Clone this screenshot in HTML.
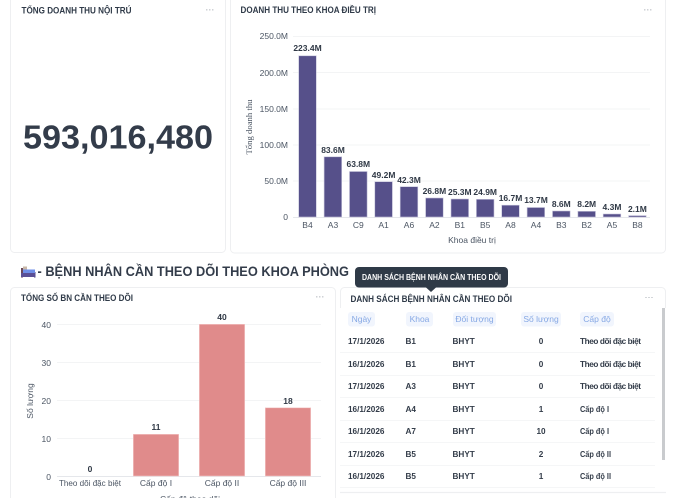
<!DOCTYPE html>
<html><head><meta charset="utf-8"><style>
html,body{margin:0;padding:0;width:682px;height:498px;overflow:hidden;background:#fff}
svg{display:block;font-family:"Liberation Sans",sans-serif}
.t{font-size:9.5px;font-weight:bold;fill:#2f3a48}
.a{font-size:8.5px;fill:#4b5563}
.v{font-size:8.5px;font-weight:bold;fill:#303946;text-anchor:middle}
.m{text-anchor:middle}
.e{text-anchor:end}
.g{stroke:#f3f4f5;stroke-width:1}
.b{fill:#56508a;stroke:#c6c4da;stroke-width:.6}
.r{fill:#e08b8b;stroke:#f3c9c9;stroke-width:.6}
.c{font-size:8.2px;font-weight:bold;fill:#333c49}
.h{font-size:8.5px;fill:#86a8e4;text-anchor:middle}
.p{fill:#f1f5fd}
.l{stroke:#f5f6f7;stroke-width:1}
</style></head><body>
<svg width="682" height="498" viewBox="0 0 682 498" xmlns="http://www.w3.org/2000/svg">
<rect x="10.5" y="-10" width="215" height="262.5" rx="4" fill="#fff" stroke="#eeeff1"/>
<rect x="230.5" y="-10" width="435" height="263" rx="4" fill="#fff" stroke="#eeeff1"/>
<rect x="10.5" y="287.5" width="325" height="230" rx="4" fill="#fff" stroke="#eeeff1"/>
<rect x="340.5" y="287.5" width="325" height="230" rx="4" fill="#fff" stroke="#eeeff1"/>
<rect x="340" y="308" width="327" height="190" fill="#fff"/>

<text class="t" x="21.5" y="13.5" textLength="110" lengthAdjust="spacingAndGlyphs">TỔNG DOANH THU NỘI TRÚ</text>
<text x="210" y="13" font-size="9" fill="#c4c7cc" font-weight="bold" class="m">···</text>
<text x="23" y="148.5" font-size="33.5" font-weight="bold" fill="#333c4a" textLength="190" lengthAdjust="spacingAndGlyphs">593,016,480</text>

<text class="t" x="240.5" y="13" textLength="135.5" lengthAdjust="spacingAndGlyphs">DOANH THU THEO KHOA ĐIỀU TRỊ</text>
<text x="648" y="13" font-size="9" fill="#c4c7cc" font-weight="bold" class="m">···</text>
<g class="g"><line x1="293" x2="650" y1="36.5" y2="36.5"/><line x1="293" x2="650" y1="72.5" y2="72.5"/><line x1="293" x2="650" y1="109" y2="109"/><line x1="293" x2="650" y1="145" y2="145"/><line x1="293" x2="650" y1="181" y2="181"/></g>
<line x1="293" x2="650" y1="217.5" y2="217.5" stroke="#e5e7eb"/>
<g class="a e"><text x="288" y="39">250.0M</text><text x="288" y="76">200.0M</text><text x="288" y="112">150.0M</text><text x="288" y="148">100.0M</text><text x="288" y="184">50.0M</text><text x="288" y="220">0</text></g>
<text class="a m" transform="translate(252,127) rotate(-90)" font-family="Liberation Serif" textLength="55" lengthAdjust="spacingAndGlyphs">Tổng doanh thu</text>
<g class="b">
<rect x="298.7" y="55.8" width="17.6" height="161.2"/><rect x="324.1" y="156.8" width="17.6" height="60.2"/><rect x="349.5" y="171.5" width="17.6" height="45.5"/><rect x="374.8" y="181.7" width="17.6" height="35.3"/><rect x="400.2" y="186.7" width="17.6" height="30.3"/><rect x="425.6" y="198" width="17.6" height="19"/><rect x="451" y="199" width="17.6" height="18"/><rect x="476.4" y="199.3" width="17.6" height="17.7"/><rect x="501.7" y="205.2" width="17.6" height="11.8"/><rect x="527.1" y="207.5" width="17.6" height="9.5"/><rect x="552.5" y="211" width="17.6" height="6"/><rect x="577.9" y="211.3" width="17.6" height="5.7"/><rect x="603.2" y="214" width="17.6" height="3"/><rect x="628.6" y="215.6" width="17.6" height="1.4"/>
</g>
<g class="v"><text x="307.5" y="51">223.4M</text><text x="333" y="153">83.6M</text><text x="358.3" y="167">63.8M</text><text x="383.6" y="178">49.2M</text><text x="409" y="183">42.3M</text><text x="434.4" y="194">26.8M</text><text x="459.8" y="195">25.3M</text><text x="485.2" y="195">24.9M</text><text x="510.5" y="201">16.7M</text><text x="536" y="203">13.7M</text><text x="561.3" y="207">8.6M</text><text x="586.7" y="207">8.2M</text><text x="612" y="210">4.3M</text><text x="637.4" y="212">2.1M</text></g>
<g class="a m"><text x="307.5" y="228">B4</text><text x="333" y="228">A3</text><text x="358.3" y="228">C9</text><text x="383.6" y="228">A1</text><text x="409" y="228">A6</text><text x="434.4" y="228">A2</text><text x="459.8" y="228">B1</text><text x="485.2" y="228">B5</text><text x="510.5" y="228">A8</text><text x="536" y="228">A4</text><text x="561.3" y="228">B3</text><text x="586.7" y="228">B2</text><text x="612" y="228">A5</text><text x="637.4" y="228">B8</text><text x="472" y="243">Khoa điều trị</text></g>

<g>
<rect x="21" y="268" width="2" height="9.5" fill="#6b4a5a"/><rect x="34" y="272" width="1.5" height="5.5" fill="#4a4a8a"/>
<rect x="23" y="266.5" width="4" height="3.5" fill="#c9b8a8"/><rect x="23" y="269.5" width="12" height="4" fill="#6f8fe8"/><rect x="21" y="273" width="14.5" height="4" fill="#5a4f96"/>
</g>
<text x="37.5" y="276" font-size="14" font-weight="bold" fill="#333c4a" textLength="311.5" lengthAdjust="spacingAndGlyphs">- BỆNH NHÂN CẦN THEO DÕI THEO KHOA PHÒNG</text>

<text class="t" x="21" y="301" textLength="112" lengthAdjust="spacingAndGlyphs">TỔNG SỐ BN CẦN THEO DÕI</text>
<text x="320" y="300" font-size="9" fill="#c4c7cc" font-weight="bold" class="m">···</text>
<g class="g"><line x1="57" x2="321" y1="324.5" y2="324.5"/><line x1="57" x2="321" y1="362.5" y2="362.5"/><line x1="57" x2="321" y1="400.5" y2="400.5"/><line x1="57" x2="321" y1="438.5" y2="438.5"/></g>
<line x1="57" x2="321" y1="476.5" y2="476.5" stroke="#e5e7eb"/>
<g class="a e"><text x="51" y="328">40</text><text x="51" y="366">30</text><text x="51" y="404">20</text><text x="51" y="442">10</text><text x="51" y="480">0</text></g>
<text class="a m" transform="translate(33,401) rotate(-90)">Số lượng</text>
<g class="r"><rect x="133.3" y="434.3" width="45.4" height="41.7"/><rect x="199.3" y="324.3" width="45.4" height="151.7"/><rect x="265.3" y="407.8" width="45.4" height="68.2"/></g>
<g class="v"><text x="90" y="472">0</text><text x="156" y="430">11</text><text x="222" y="320">40</text><text x="288" y="404">18</text></g>
<g class="a m"><text x="90" y="486" textLength="62" lengthAdjust="spacingAndGlyphs">Theo dõi đặc biệt</text><text x="156" y="486">Cấp độ I</text><text x="222" y="486">Cấp độ II</text><text x="288" y="486">Cấp độ III</text><text x="190" y="502">Cấp độ theo dõi</text></g>

<text x="350.5" y="302" font-size="9.5" fill="#2f3a48" font-weight="bold" textLength="161.5" lengthAdjust="spacingAndGlyphs">DANH SÁCH BỆNH NHÂN CẦN THEO DÕI</text>
<text x="649" y="300" font-size="9" fill="#9aa0a8" class="m">···</text>

<g class="p"><rect x="348" y="312" width="27" height="14.5" rx="3"/><rect x="406" y="312" width="27" height="14.5" rx="3"/><rect x="453" y="312" width="43" height="14.5" rx="3"/><rect x="521" y="312" width="40" height="14.5" rx="3"/><rect x="580" y="312" width="34" height="14.5" rx="3"/></g>
<g class="h"><text x="361.5" y="322">Ngày</text><text x="419.5" y="322">Khoa</text><text x="474.5" y="322">Đối tượng</text><text x="541" y="322">Số lượng</text><text x="597" y="322">Cấp độ</text></g>

<g class="l"><line x1="340" x2="655" y1="352.5" y2="352.5"/><line x1="340" x2="655" y1="375.5" y2="375.5"/><line x1="340" x2="655" y1="397.5" y2="397.5"/><line x1="340" x2="655" y1="420.5" y2="420.5"/><line x1="340" x2="655" y1="442.5" y2="442.5"/><line x1="340" x2="655" y1="465.5" y2="465.5"/><line x1="340" x2="655" y1="487.5" y2="487.5"/></g>
<g class="c">
<text x="348" y="344">17/1/2026</text><text x="405.5" y="344">B1</text><text x="452.5" y="344">BHYT</text><text x="541" y="344" class="m">0</text><text x="580" y="344" textLength="61" lengthAdjust="spacing">Theo dõi đặc biệt</text>
<text x="348" y="367">16/1/2026</text><text x="405.5" y="367">B1</text><text x="452.5" y="367">BHYT</text><text x="541" y="367" class="m">0</text><text x="580" y="367" textLength="61" lengthAdjust="spacing">Theo dõi đặc biệt</text>
<text x="348" y="389">17/1/2026</text><text x="405.5" y="389">A3</text><text x="452.5" y="389">BHYT</text><text x="541" y="389" class="m">0</text><text x="580" y="389" textLength="61" lengthAdjust="spacing">Theo dõi đặc biệt</text>
<text x="348" y="412">16/1/2026</text><text x="405.5" y="412">A4</text><text x="452.5" y="412">BHYT</text><text x="541" y="412" class="m">1</text><text x="580" y="412" textLength="29" lengthAdjust="spacingAndGlyphs">Cấp độ I</text>
<text x="348" y="434">16/1/2026</text><text x="405.5" y="434">A7</text><text x="452.5" y="434">BHYT</text><text x="541" y="434" class="m">10</text><text x="580" y="434" textLength="29" lengthAdjust="spacingAndGlyphs">Cấp độ I</text>
<text x="348" y="457">17/1/2026</text><text x="405.5" y="457">B5</text><text x="452.5" y="457">BHYT</text><text x="541" y="457" class="m">2</text><text x="580" y="457" textLength="31" lengthAdjust="spacingAndGlyphs">Cấp độ II</text>
<text x="348" y="479">16/1/2026</text><text x="405.5" y="479">B5</text><text x="452.5" y="479">BHYT</text><text x="541" y="479" class="m">1</text><text x="580" y="479" textLength="31" lengthAdjust="spacingAndGlyphs">Cấp độ II</text>
</g>
<rect x="662" y="308" width="3" height="152" fill="#c9cbce"/>
<line x1="340" x2="666" y1="492.5" y2="492.5" stroke="#eeeff1" stroke-width="1.2"/>

<rect x="355" y="267" width="153" height="20.5" rx="4" fill="#2f3a47"/>
<path d="M426 287.5 L431 292 L436 287.5Z" fill="#2f3a47"/>
<text x="431.5" y="280" font-size="8.5" font-weight="bold" fill="#fff" class="m" textLength="139" lengthAdjust="spacingAndGlyphs">DANH SÁCH BỆNH NHÂN CẦN THEO DÕI</text>
</svg>
</body></html>
